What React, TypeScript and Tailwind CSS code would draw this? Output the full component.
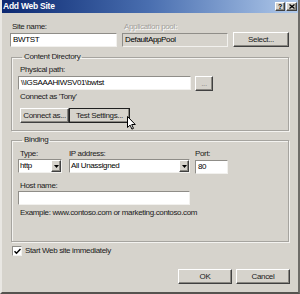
import React from 'react'

const raised =
  'border border-t-white border-l-white border-b-[#404040] border-r-[#404040] shadow-[inset_-1px_-1px_0_#8a8882] bg-[#d6d3cc]'
const sunken = 'border border-t-[#8f8d88] border-l-[#8f8d88] border-b-[#f2f1ee] border-r-[#f2f1ee]'

function Label({ children, dim = false }: { children: React.ReactNode; dim?: boolean }) {
  return (
    <div
      className={`h-[10px] leading-[10px] whitespace-nowrap ${
        dim ? 'text-[#a3a19c] [text-shadow:1px_1px_0_#fff]' : 'text-[#1a1a1a]'
      }`}
    >
      {children}
    </div>
  )
}

function TextBox({ value = '', className = '', disabled = false }: { value?: string; className?: string; disabled?: boolean }) {
  return (
    <div
      className={`h-[14px] ${sunken} ${disabled ? 'bg-[#d6d3cc]' : 'bg-white'} px-[2px] leading-[12px] text-black whitespace-nowrap overflow-hidden ${className}`}
    >
      {value}
    </div>
  )
}

function Button({ children, className = '' }: { children: React.ReactNode; className?: string }) {
  return (
    <div
      className={`h-[15px] ${raised} flex items-center justify-center leading-none text-[#1a1a1a] whitespace-nowrap ${className}`}
    >
      {children}
    </div>
  )
}

function Select({ value, className = '' }: { value: string; className?: string }) {
  return (
    <div className={`h-[14px] ${sunken} bg-white flex items-stretch ${className}`}>
      <div className="flex-1 px-[1px] leading-[12px] text-black whitespace-nowrap overflow-hidden">{value}</div>
      <div className={`w-[10px] ${raised} flex items-center justify-center border-t-[#f0efec] border-l-[#f0efec]`}>
        <svg width="5" height="3" viewBox="0 0 5 3">
          <path d="M0 0h5L2.5 3z" fill="#000" />
        </svg>
      </div>
    </div>
  )
}

function Group({ title, children, className = '' }: { title: string; children: React.ReactNode; className?: string }) {
  return (
    <fieldset
      className={`ml-[1px] w-[278px] border border-[#a6a49f] shadow-[inset_1px_1px_0_#f4f3f0,1px_1px_0_#f4f3f0] px-[6px] ${className}`}
    >
      <legend className="ml-[4px] px-[2px] h-[10px] leading-[10px] text-[#1a1a1a]">{title}</legend>
      {children}
    </fieldset>
  )
}

export default function App() {
  return (
    <div className="relative w-[300px] h-[294px] flex flex-col bg-[#d6d3cc] border-l-2 border-r-2 border-b-2 border-l-[#e9e7e3] border-r-[#6e6c68] border-b-[#55534f] font-['Liberation_Sans',Arial,sans-serif] text-[8px] tracking-[-0.35px] overflow-hidden select-none">
      {/* title bar */}
      <div className="-mx-[2px] h-[13px] flex items-center bg-linear-to-r from-[#0c2770] via-[#4a6fb0] to-[#b3cbeb] pl-[3px] pr-[3px]">
        <span className="text-[8.5px] tracking-[-0.25px] font-bold text-white leading-none">Add Web Site</span>
        <div className="ml-auto flex gap-[1px]">
          <div className={`w-[10px] h-[9px] ${raised} flex items-center justify-center text-[7px] font-bold leading-none text-black`}>?</div>
          <div className={`w-[11px] h-[9px] ${raised} flex items-center justify-center`}>
            <svg width="6" height="5" viewBox="0 0 6 5">
              <path d="M0.5 0.5l5 4M5.5 0.5l-5 4" stroke="#000" strokeWidth="1.3" />
            </svg>
          </div>
        </div>
      </div>

      <div className="flex flex-col pl-[8px]">
        {/* site name / app pool */}
        <div className="mt-[9px] flex items-end">
          <div className="w-[107px]">
            <div className="pl-[2px]">
              <Label>Site name:</Label>
            </div>
            <TextBox value="BWTST" className="mt-[1px]" />
          </div>
          <div className="ml-[5px] w-[106px]">
            <div className="pl-[2px]">
              <Label dim>Application pool:</Label>
            </div>
            <TextBox value="DefaultAppPool" disabled className="mt-[1px]" />
          </div>
          <Button className="ml-[5px] w-[56px] h-[14px]">Select...</Button>
        </div>

        <Group title="Content Directory" className="mt-[5px] pb-[7px]">
          <div className="mt-[3px] pl-[2px]">
            <Label>Physical path:</Label>
          </div>
          <div className="mt-[1px] flex">
            <TextBox value={'\\\\IGSAAAHIWSV01\\bwtst'} className="w-[173px]" />
            <Button className="ml-[4px] w-[18px] h-[14px] text-[#8a8882]">...</Button>
          </div>
          <div className="mt-[1px] pl-[2px]">
            <Label>Connect as 'Tony'</Label>
          </div>
          <div className="mt-[6px] flex">
            <Button className="ml-[2px] w-[49px]">Connect as...</Button>
            <Button className="w-[61px] outline outline-1 outline-[#202020] -outline-offset-1">Test Settings...</Button>
          </div>
        </Group>

        <Group title="Binding" className="mt-[4px] pb-[23px]">
          <div className="mt-[4px] flex">
            <div className="w-[44px]">
              <div className="pl-[2px]">
                <Label>Type:</Label>
              </div>
              <Select value="http" />
            </div>
            <div className="ml-[7px] w-[121px]">
              <Label>IP address:</Label>
              <Select value="All Unassigned" />
            </div>
            <div className="ml-[5px] w-[33px]">
              <Label>Port:</Label>
              <TextBox value="80" className="mt-[1px]" />
            </div>
          </div>
          <div className="mt-[7px] pl-[2px]">
            <Label>Host name:</Label>
          </div>
          <TextBox className="w-[172px]" />
          <div className="mt-[3px] ml-[2px]">
            <Label>Example: www.contoso.com or marketing.contoso.com</Label>
          </div>
        </Group>

        <div className="mt-[4px] ml-[2px] flex items-center">
          <div className={`w-[10px] h-[10px] ${sunken} bg-white flex items-center justify-center`}>
            <svg width="7" height="7" viewBox="0 0 7 7">
              <path d="M0.5 3.2l2 2 4-4.2" fill="none" stroke="#000" strokeWidth="1.5" />
            </svg>
          </div>
          <span className="ml-[3px] leading-[10px] text-[#1a1a1a]">Start Web site immediately</span>
        </div>

        <div className="mt-[13px] flex justify-end pr-[8px]">
          <Button className="w-[54px]">OK</Button>
          <Button className="ml-[4px] w-[54px]">Cancel</Button>
        </div>
      </div>

      {/* mouse pointer */}
      <svg className="absolute left-[125px] top-[116px]" width="9" height="14" viewBox="0 0 9 14">
        <path d="M0.5 0.5v11l2.6-2.4 1.8 4 1.6-.7-1.8-3.9h3.6z" fill="#fff" stroke="#000" strokeWidth="1" strokeLinejoin="round" />
      </svg>
    </div>
  )
}
